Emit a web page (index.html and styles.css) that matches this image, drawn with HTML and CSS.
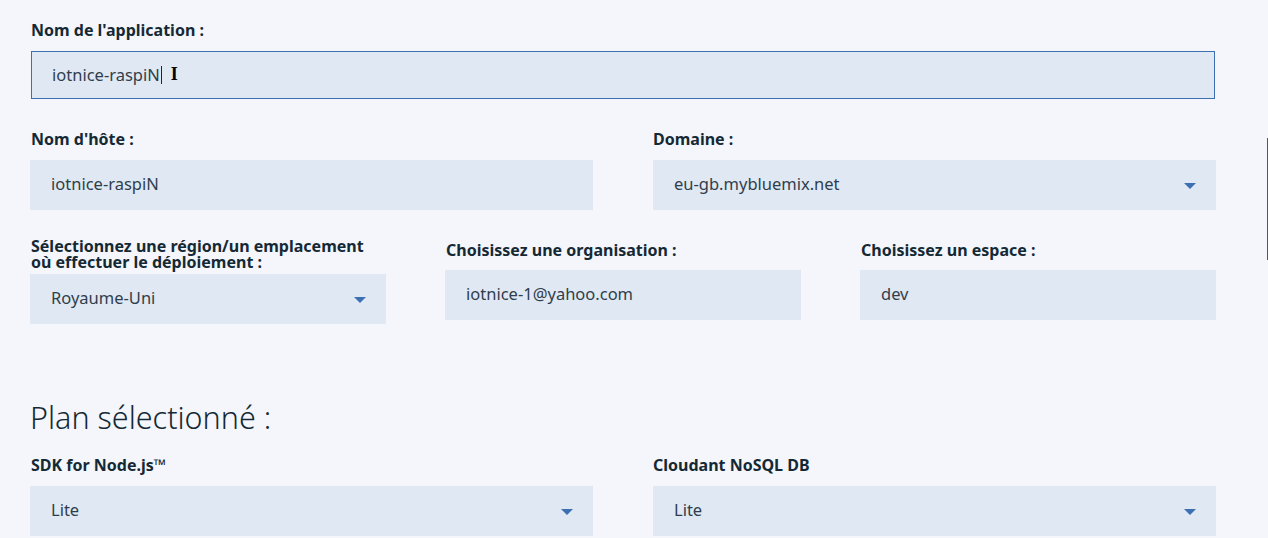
FILE: index.html
```html
<!DOCTYPE html>
<html lang="fr">
<head>
<meta charset="utf-8">
<title>Créer une application</title>
<link rel="stylesheet" href="styles.css">
</head>
<body>
<main class="form">
  <div class="field field-app">
    <label class="label">Nom de l'application :</label>
    <div class="input input-focus"><span class="value">iotnice-raspiN</span><span class="caret"></span><span class="ibeam">I</span></div>
  </div>

  <div class="row two">
    <div class="field">
      <label class="label">Nom d'hôte :</label>
      <div class="input"><span class="value">iotnice-raspiN</span></div>
    </div>
    <div class="field">
      <label class="label">Domaine :</label>
      <div class="input select"><span class="value">eu-gb.mybluemix.net</span><span class="arrow"></span></div>
    </div>
  </div>

  <div class="row three">
    <div class="field region">
      <label class="label label-2l"><span class="l">Sélectionnez une région/un emplacement</span><span class="l">où effectuer le déploiement :</span></label>
      <div class="input select"><span class="value">Royaume-Uni</span><span class="arrow"></span></div>
    </div>
    <div class="field">
      <label class="label">Choisissez une organisation :</label>
      <div class="input"><span class="value">iotnice-1@yahoo.com</span></div>
    </div>
    <div class="field">
      <label class="label">Choisissez un espace :</label>
      <div class="input"><span class="value">dev</span></div>
    </div>
  </div>

  <h2 class="section-title">Plan sélectionné :</h2>

  <div class="row two plans">
    <div class="field">
      <label class="label">SDK for Node.js™</label>
      <div class="input select"><span class="value">Lite</span><span class="arrow"></span></div>
    </div>
    <div class="field">
      <label class="label">Cloudant NoSQL DB</label>
      <div class="input select"><span class="value">Lite</span><span class="arrow"></span></div>
    </div>
  </div>
</main>
<div class="scroll-thumb"></div>
</body>
</html>
```

FILE: styles.css
```css
html, body {
  margin: 0;
  padding: 0;
  background: #f4f6fb;
  height: 100%;
  overflow: hidden;
}
body {
  font-family: "Noto Sans", "Open Sans", sans-serif;
  color: #152935;
}
.form {
  width: 1186px;
  padding: 20px 0 0 30px;
}
.field {
  display: flex;
  flex-direction: column;
}
.label {
  font-size: 16px;
  font-weight: 700;
  line-height: 20px;
  margin: 0 0 11px 1px;
  color: #152935;
  white-space: nowrap;
}
.input {
  position: relative;
  display: flex;
  align-items: center;
  height: 50px;
  box-sizing: border-box;
  background: #e0e8f3;
  padding: 0 20px 3px 21px;
  font-size: 16.5px;
  color: #2f3e4c;
}
.input-focus {
  height: 48px;
  margin: 0 1px;
  border: 1px solid #3d70b2;
  padding-left: 20px;
  padding-bottom: 1px;
}
.value {
  white-space: nowrap;
}
.caret {
  display: inline-block;
  width: 1px;
  height: 18px;
  background: #152935;
  margin-left: 1px;
}
.ibeam {
  font-family: "Liberation Serif", serif;
  font-weight: 700;
  font-size: 18px;
  color: #000;
  margin-left: 9px;
}
.select .arrow {
  margin-left: auto;
  width: 0;
  height: 0;
  border-left: 6.5px solid transparent;
  border-right: 6.5px solid transparent;
  border-top: 6px solid #3d70b2;
  margin-top: 4px;
}
.row {
  display: grid;
  margin-top: 30px;
}
.row.two {
  grid-template-columns: 563px 563px;
  column-gap: 60px;
}
.row.two .field:last-child .label {
  margin-left: 0;
}
.row.three {
  grid-template-columns: 356px 356px 356px;
  column-gap: 59px;
  margin-top: 30px;
  align-items: start;
}
.row.three .field:not(.region) .label {
  margin-left: 1px;
  margin-bottom: 10px;
}
.region .label-2l {
  display: flex;
  flex-direction: column;
  margin-top: -2px;
  margin-bottom: 4px;
}
.region .label-2l .l {
  display: block;
  line-height: 16px;
  height: 16px;
}
.section-title {
  font-size: 30.5px;
  font-weight: 300;
  line-height: 36px;
  margin: 75px 0 0 0;
  color: #152935;
}
.row.plans {
  margin-top: 20px;
}
.scroll-thumb {
  position: absolute;
  right: 0;
  top: 138px;
  width: 1px;
  height: 122px;
  background: #555;
}
```
